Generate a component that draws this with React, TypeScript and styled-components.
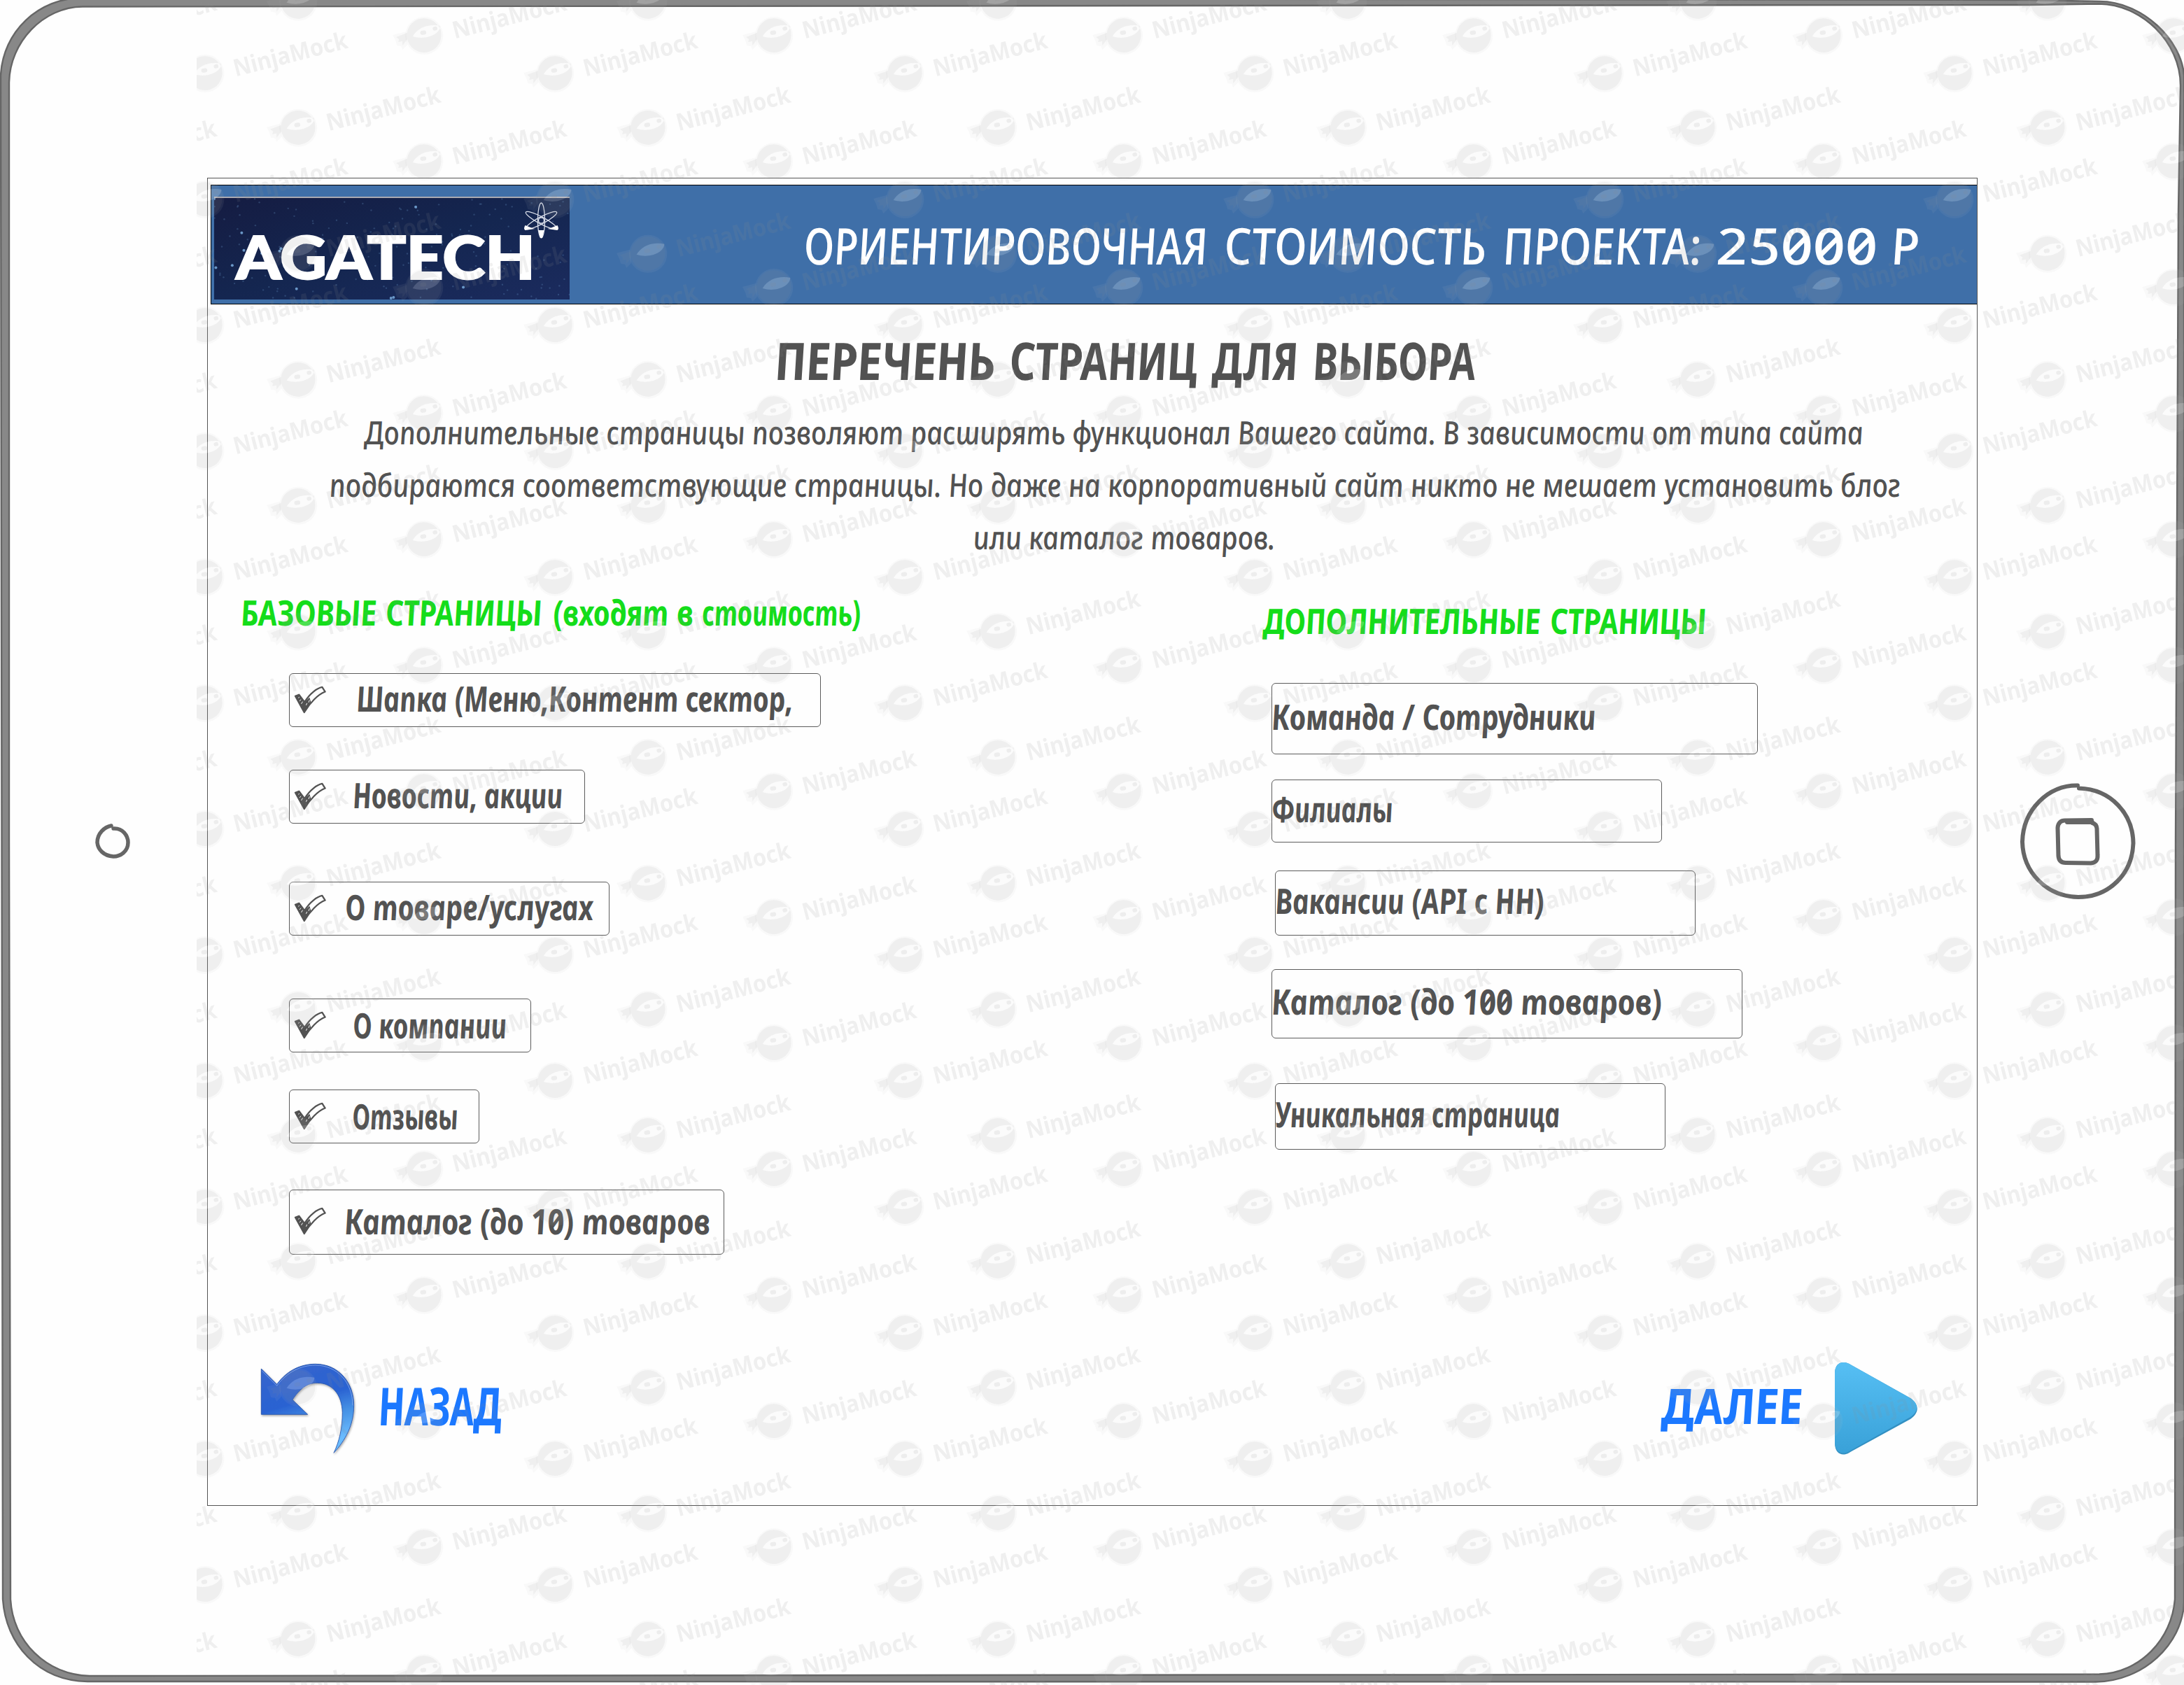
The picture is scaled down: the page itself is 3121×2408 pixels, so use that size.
import React, { useLayoutEffect, useRef, useState } from "react";
import styled, { createGlobalStyle } from "styled-components";

const INK = "#525252";
const GREEN = "#14dd1a";
const BLUE = "#1b78ff";

const GlobalStyle = createGlobalStyle`
  html, body { margin: 0; background: #fefefe; }
  body { width: 3121px; height: 2408px; overflow: hidden; }
  * { box-sizing: border-box; }
`;

const Device = styled.main`
  position: relative;
  width: 3121px;
  height: 2408px;
  overflow: hidden;
  display: grid;
  grid-template-columns: 296px 2530px 295px;
  grid-template-rows: 1898px;
  padding-top: 254px;
  font-family: "Noto Sans", "Open Sans", sans-serif;
`;

const Overlay = styled.svg<{ $left?: number }>`
  position: absolute;
  top: 0;
  left: ${(p) => p.$left ?? 0}px;
  pointer-events: none;
`;

const Bezel = styled.div<{ $shift: number }>`
  display: flex;
  align-items: center;
  justify-content: center;
  padding-left: ${(p) => Math.max(p.$shift, 0)}px;
  padding-right: ${(p) => Math.max(-p.$shift, 0)}px;
`;

const Screen = styled.section`
  border: 1px solid #555;
  display: flex;
  flex-direction: column;
`;

const Header = styled.header`
  display: flex;
  align-items: flex-start;
  flex: none;
  height: 171px;
  margin: 9px 0 0 4px;
  padding-left: 4px;
  background: #3f6fa8;
  border: 1px solid #000;
  border-right: 0;
`;

const Logo = styled.svg`
  flex: none;
  margin-top: 16px;
  margin-right: 336px;
`;

const TextBox = styled.div<{ $w: number; $lh: number; $mt: number; $ml: number }>`
  flex: none;
  width: ${(p) => p.$w}px;
  height: ${(p) => p.$lh}px;
  line-height: ${(p) => p.$lh}px;
  margin: ${(p) => p.$mt}px 0 0 ${(p) => p.$ml}px;
`;

const Glyphs = styled.span<{ $size: number; $weight: number; $color: string }>`
  display: inline-block;
  vertical-align: top;
  white-space: nowrap;
  transform-origin: 0 70%;
  font-size: ${(p) => p.$size}px;
  font-weight: ${(p) => p.$weight};
  font-style: italic;
  font-feature-settings: "zero" 1;
  color: ${(p) => p.$color};
`;

type HandProps = {
  children: string;
  w: number;
  size?: number;
  lh?: number;
  mt?: number;
  ml?: number;
  weight?: number;
  color?: string;
};

/* A piece of lettering condensed or stretched to an exact width. */
function Hand({ children, w, size = 50, lh = 60, mt = 0, ml = 0, weight = 700, color = INK }: HandProps) {
  const ref = useRef<HTMLSpanElement>(null);
  const [scale, setScale] = useState(1);
  useLayoutEffect(() => {
    if (ref.current) setScale(w / ref.current.offsetWidth);
  }, [w, children]);
  return (
    <TextBox $w={w} $lh={lh} $mt={mt} $ml={ml}>
      <Glyphs ref={ref} $size={size} $weight={weight} $color={color} style={{ transform: `scaleX(${scale}) skewX(8deg)` }}>
        {children}
      </Glyphs>
    </TextBox>
  );
}

const Heading = styled.h2<{ $mt?: number; $ml?: number }>`
  display: flex;
  flex: none;
  margin: ${(p) => p.$mt ?? 0}px 0 0 ${(p) => p.$ml ?? 0}px;
`;

type Word = { t: string; w: number; gap?: number };

const Words = ({ words, ...style }: { words: Word[] } & Omit<HandProps, "children" | "w" | "ml">) => (
  <>
    {words.map((word) => (
      <Hand key={word.t} w={word.w} ml={word.gap} {...style}>
        {word.t}
      </Hand>
    ))}
  </>
);

const priceWords: Word[] = [
  { t: "ОРИЕНТИРОВОЧНАЯ", w: 577 },
  { t: "СТОИМОСТЬ", w: 374, gap: 24 },
  { t: "ПРОЕКТА:", w: 284, gap: 24 },
  { t: "25000", w: 230, gap: 21 },
  { t: "Р", w: 40, gap: 20 },
];

const titleWords: Word[] = [
  { t: "ПЕРЕЧЕНЬ", w: 315 },
  { t: "СТРАНИЦ", w: 268, gap: 20 },
  { t: "ДЛЯ", w: 122, gap: 22 },
  { t: "ВЫБОРА", w: 233, gap: 21 },
];

const includedWords: Word[] = [
  { t: "БАЗОВЫЕ", w: 194 },
  { t: "СТРАНИЦЫ", w: 223, gap: 13 },
  { t: "(входят", w: 165, gap: 16 },
  { t: "в", w: 24, gap: 12 },
  { t: "стоимость)", w: 227, gap: 12 },
];

const extraWords: Word[] = [
  { t: "ДОПОЛНИТЕЛЬНЫЕ", w: 396 },
  { t: "СТРАНИЦЫ", w: 223, gap: 14 },
];

const Intro = styled.div`
  display: flex;
  flex-direction: column;
  flex: none;
  margin-top: 15px;
`;

const Columns = styled.div`
  display: grid;
  grid-template-columns: 1509px 1fr;
  flex: none;
  height: 1140px;
`;

const Column = styled.div<{ $pl: number; $pt: number }>`
  display: flex;
  flex-direction: column;
  align-items: flex-start;
  padding: ${(p) => p.$pt}px 0 0 ${(p) => p.$pl}px;
`;

const Option = styled.div<{ $w: number; $h: number; $mt: number; $ml: number }>`
  display: flex;
  align-items: flex-start;
  flex: none;
  width: ${(p) => p.$w}px;
  height: ${(p) => p.$h}px;
  margin: ${(p) => p.$mt}px 0 0 ${(p) => p.$ml}px;
  border: 1px solid #5c5c5c;
  border-radius: 6px;
`;

const CheckSvg = styled.svg<{ $mt: number }>`
  flex: none;
  margin: ${(p) => p.$mt}px 0 0 6px;
`;

const Footer = styled.footer`
  display: flex;
  justify-content: space-between;
  padding: 0 85px 0 73px;
`;

const NavButton = styled.button`
  display: flex;
  align-items: flex-start;
  padding: 0;
  border: 0;
  background: none;
  font-family: inherit;
  text-align: left;
`;

const PlaySvg = styled.svg`
  margin: 2px 0 0 45px;
`;

const CheckMark = ({ mt }: { mt: number }) => (
  <CheckSvg $mt={mt} width="46" height="40" viewBox="60 87 140 122">
    <path d="M66 132 L82 126 L106 158 L128 138 L134 158 L105 203 Z" fill={INK} />
    <path d="M66 132 L82 126 L106 158 C130 120 160 98 183 93 L196 113 C165 125 130 160 105 203 Z" fill="none" stroke={INK} strokeWidth="7" strokeLinejoin="round" />
    <path d="M79 140 l5 -4 M84 154 l7 -7 M92 166 l6 -10 M113 172 l4 -9 M124 160 l4 -11 M142 144 l5 -5" stroke="#fefefe" strokeWidth="3" />
  </CheckSvg>
);

const included = [
  { text: "Шапка (Меню,Контент сектор,", w: 760, h: 77, mt: 57, x: 44, tw: 624, tt: 5, ct: 17 },
  { text: "Новости, акции", w: 423, h: 77, mt: 61, x: 39, tw: 300, tt: 5, ct: 17 },
  { text: "О товаре/услугах", w: 458, h: 77, mt: 83, x: 28, tw: 354, tt: 5, ct: 17 },
  { text: "О компании", w: 346, h: 77, mt: 90, x: 39, tw: 220, tt: 7, ct: 17 },
  { text: "Отзывы", w: 272, h: 77, mt: 53, x: 38, tw: 151, tt: 7, ct: 17 },
  { text: "Каталог (до 10) товаров", w: 622, h: 93, mt: 66, x: 27, tw: 523, tt: 14, ct: 24 },
];

const extra = [
  { text: "Команда / Сотрудники", w: 695, h: 102, mt: 59, ml: 11, tw: 463, tt: 17 },
  { text: "Филиалы", w: 558, h: 90, mt: 36, ml: 11, tw: 173, tt: 11 },
  { text: "Вакансии (API с HH)", w: 601, h: 93, mt: 40, ml: 16, tw: 385, tt: 12 },
  { text: "Каталог (до 100 товаров)", w: 673, h: 99, mt: 48, ml: 11, tw: 558, tt: 15 },
  { text: "Уникальная страница", w: 558, h: 95, mt: 64, ml: 16, tw: 407, tt: 13 },
];

const stars = Array.from({ length: 190 }, (_, i) => {
  const x = (Math.abs(Math.sin(i * 12.9898) * 43758.5453) % 1) * 508;
  const y = (Math.abs(Math.sin(i * 78.233) * 12543.123) % 1) * 143 + 3;
  return { x, y, r: i % 13 === 0 ? 2 : 1.2, o: i % 13 === 0 ? 0.8 : 0.22 };
});

function AgatechLogo() {
  return (
    <Logo width="508" height="147" viewBox="0 0 508 147">
      <defs>
        <linearGradient id="night" x1="0" y1="0" x2="1" y2="1">
          <stop offset="0" stopColor="#151c42" />
          <stop offset="0.5" stopColor="#142650" />
          <stop offset="1" stopColor="#1b2b5e" />
        </linearGradient>
      </defs>
      <rect width="508" height="147" fill="url(#night)" />
      {stars.map((s, i) => (
        <circle key={i} cx={s.x} cy={s.y} r={s.r} fill="#7fb4e6" opacity={s.o} />
      ))}
      <rect width="508" height="2" fill="#a9a9b1" />
      <text x="31" y="117.500" fontFamily="Lato, sans-serif" fontWeight="900" fontSize="86" fill="#fff" stroke="#fff" strokeWidth="2" textLength="428" lengthAdjust="spacingAndGlyphs">
        AGATECH
      </text>
      <g transform="translate(467.500 34)" fill="none" stroke="#d9deea" strokeWidth="1.3">
        <ellipse rx="5" ry="25" />
        <ellipse rx="5" ry="25" transform="rotate(62)" />
        <ellipse rx="5" ry="25" transform="rotate(-62)" />
        <circle r="4" />
      </g>
      <g transform="translate(467.500 34)" fill="#fff">
        <path d="M-4 14 L4 14 L1.500 25 L-1.500 25 Z" />
        <path d="M-23 7 L-13 11 L-9 12 L-23 14 Q-26 12 -23 7 Z" />
        <path d="M23 7 L13 11 L9 12 L23 14 Q26 12 23 7 Z" />
      </g>
    </Logo>
  );
}

const marks = [
  [12.3, 105],
  [145.2, 2.8],
  [325.2, 51],
];

const Ninja = ({ x, y }: { x: number; y: number }) => (
  <g transform={`translate(${x} ${y})`}>
    <circle r="27" fill="#bbb" fillOpacity="0.08" />
    <path d="M-45 -1 L-26 -6 L-24 13 L-31 20 L-33 15 L-39 14 L-41 7 Z" fill="#bbb" fillOpacity="0.08" />
    <path
      fillRule="evenodd"
      fill="#888"
      fillOpacity="0.09"
      d="M-24.500 3 A24.500 24.500 0 1 0 24 -4 Q24 -10 20 -14 A24.500 24.500 0 0 0 -24.500 -4 L-40 2 L-36 5 L-37 9 L-31 8 L-31 14 L-24 5 Z M-16.500 1 C-8 -13 8 -17 23 -14 C23 -2 2 7 -16.500 1 Z"
    />
    <path d="M-16.500 1 C-8 -13 8 -17 23 -14 C23 -2 2 7 -16.500 1 Z" fill="#fff" fillOpacity="0.14" />
    <path d="M-16.500 1 C-8 -13 8 -17 23 -14 C23 -2 2 7 -16.500 1 Z" fill="#fff" fillOpacity="0.05" />
    <rect x="-5" y="-7.500" width="8.500" height="6" rx="2.800" fill="#888" fillOpacity="0.12" transform="rotate(-8)" />
    <rect x="14" y="-9.500" width="6.500" height="5.500" rx="2.500" fill="#888" fillOpacity="0.12" transform="rotate(-12)" />
    <text transform="translate(43.500 4.500) rotate(-14.300)" fontFamily="Noto Sans, sans-serif" fontWeight="700" fontSize="34" fill="#888" fillOpacity="0.13" textLength="167" lengthAdjust="spacingAndGlyphs">
      NinjaMock
    </text>
  </g>
);

function Watermark() {
  return (
    <Overlay $left={281} width="2840" height="2408" aria-hidden>
      <defs>
        <pattern id="ninjas" width="500" height="180" patternUnits="userSpaceOnUse">
          {[-500, 0, 500].map((dx) =>
            [-180, 0, 180].map((dy) => marks.map(([x, y], i) => <Ninja key={`${dx}${dy}${i}`} x={x + dx} y={y + dy} />)),
          )}
        </pattern>
      </defs>
      <rect width="2840" height="2408" fill="url(#ninjas)" />
    </Overlay>
  );
}

const Frame = () => (
  <Overlay width="3121" height="2408" viewBox="0 0 3121 2408" aria-hidden>
    <path
      fillRule="evenodd"
      fill="#888"
      stroke="#666"
      strokeWidth="2.400"
      d="M118 -3 L2900 0 L3000 2 C3062 2 3118 58 3121 108 L3121 2290 C3119 2350 3062 2403 2995 2403.500 L125 2403 C55 2402 8 2350 4 2285 L1 108 C4 45 55 -3 118 -3 Z
         M118 9.500 L2900 7 L3000 5.500 C3060 6 3116 60 3116 122 L3113 300 L3109 1200 L3108 2285 C3104 2342 3058 2391 3000 2392.500 L128 2395 C66 2393 18 2346 15 2285 L13 1200 L13 118 C14 60 62 10 118 9.500 Z"
    />
  </Overlay>
);

export default function App() {
  return (
    <>
      <GlobalStyle />
      <Device>
        <Frame />
        <Bezel $shift={25}>
          <svg width="52" height="52" viewBox="0 0 52 52" fill="none" stroke="#666" strokeWidth="5.500" strokeLinecap="round">
            <path d="M27 7 C40 6 48 17 48 27 C48 40 37 47 27 47 C13 46 5 37 4 27 C4 14 14 5 24 3" />
          </svg>
        </Bezel>
        <Screen>
          <Header>
            <AgatechLogo />
            <Words words={priceWords} size={72} lh={100} mt={35} weight={500} color="#fff" />
          </Header>
          <Heading as="h1" $mt={30} $ml={812}>
            <Words words={titleWords} size={74} lh={100} />
          </Heading>
          <Intro>
            <Hand w={2142} size={46} lh={75} ml={225} weight={500}>
              Дополнительные страницы позволяют расширять функционал Вашего сайта. В зависимости от типа сайта
            </Hand>
            <Hand w={2245} size={46} lh={75} ml={175} weight={500}>
              подбираются соответствующие страницы. Но даже на корпоративный сайт никто не мешает установить блог
            </Hand>
            <Hand w={431} size={46} lh={75} ml={1095} weight={500}>
              или каталог товаров.
            </Hand>
          </Intro>
          <Columns>
            <Column $pl={48} $pt={40}>
              <Heading>
                <Words words={includedWords} color={GREEN} />
              </Heading>
              {included.map((o) => (
                <Option key={o.text} $w={o.w} $h={o.h} $mt={o.mt} $ml={68}>
                  <CheckMark mt={o.ct} />
                  <Hand w={o.tw} mt={o.tt} ml={o.x}>
                    {o.text}
                  </Hand>
                </Option>
              ))}
            </Column>
            <Column $pl={0} $pt={52}>
              <Heading>
                <Words words={extraWords} color={GREEN} />
              </Heading>
              {extra.map((o) => (
                <Option key={o.text} $w={o.w} $h={o.h} $mt={o.mt} $ml={o.ml}>
                  <Hand w={o.tw} mt={o.tt}>
                    {o.text}
                  </Hand>
                </Option>
              ))}
            </Column>
          </Columns>
          <Footer>
            <NavButton>
              <svg width="140" height="136" viewBox="60 45 420 408">
                <defs>
                  <linearGradient id="back" x1="0" y1="0" x2="0.300" y2="1">
                    <stop offset="0" stopColor="#3566cc" />
                    <stop offset="0.5" stopColor="#2a62d2" />
                    <stop offset="0.72" stopColor="#4590e4" />
                    <stop offset="1" stopColor="#6bbcff" />
                  </linearGradient>
                  <filter id="drop" x="-10%" y="-10%" width="120%" height="120%">
                    <feDropShadow dx="3" dy="5" stdDeviation="5" floodColor="#000" floodOpacity="0.35" />
                  </filter>
                </defs>
                <path
                  filter="url(#drop)"
                  fill="url(#back)"
                  stroke="#2450a8"
                  strokeWidth="2.500"
                  d="M70 78 L137 145 C180 85 240 58 302 58 C400 58 467 135 467 235 C467 320 430 385 381 439 C405 390 418 330 418 265 C416 190 375 139 310 139 C265 139 235 165 204 211 L269 274 L70 274 Z"
                />
                <path d="M74 88 L137 151 C180 92 240 63 302 63 C396 63 462 138 462 235" fill="none" stroke="#86a9ec" strokeWidth="2.500" />
              </svg>
              <Hand w={176} size={75} lh={90} mt={18} ml={32} color={BLUE}>
                НАЗАД
              </Hand>
            </NavButton>
            <NavButton>
              <Hand w={201} size={70} lh={90} mt={18} color={BLUE}>
                ДАЛЕЕ
              </Hand>
              <PlaySvg width="118" height="132" viewBox="0 0 118 132">
                <defs>
                  <linearGradient id="next" x1="0" y1="0" x2="0" y2="1">
                    <stop offset="0" stopColor="#56bff4" />
                    <stop offset="1" stopColor="#39a1d8" />
                  </linearGradient>
                </defs>
                <path d="M0 16 C0 4 6 0 12 0 C17 0 19 1 24 4 L108 51 C121 60 121 72 108 81 L24 127 C19 130 17 131.500 12 131.500 C6 131.500 0 127 0 115 Z" fill="#3390c2" />
                <path d="M0 16 C0 4 6 0 12 0 C17 0 19 1 24 4 L108 51 C120 59 120 70 108 78 L24 125 C19 128 17 129.500 12 129.500 C6 129.500 0 125 0 113 Z" fill="url(#next)" />
              </PlaySvg>
            </NavButton>
          </Footer>
        </Screen>
        <Bezel $shift={-9}>
          <svg width="168" height="168" viewBox="0 0 168 168" fill="none" stroke="#666" strokeWidth="6" strokeLinecap="round">
            <path d="M86 7.500 C132 9 163 44 163.500 86 C162 130 129 163 85 163 C39 162 6 127 5 84 C6 38 42 3 84 3.500" />
            <path d="M104 53 L67 53.500 C60 53 56 57 55.500 64 L56.500 104 C57 111 61 114 67 114 L103 114.500 C110 114 113 110 112.500 103 L111.500 65 C111 60 109 58 105 57" />
            <path d="M69 56 L105 56" />
          </svg>
        </Bezel>
        <Watermark />
      </Device>
    </>
  );
}
